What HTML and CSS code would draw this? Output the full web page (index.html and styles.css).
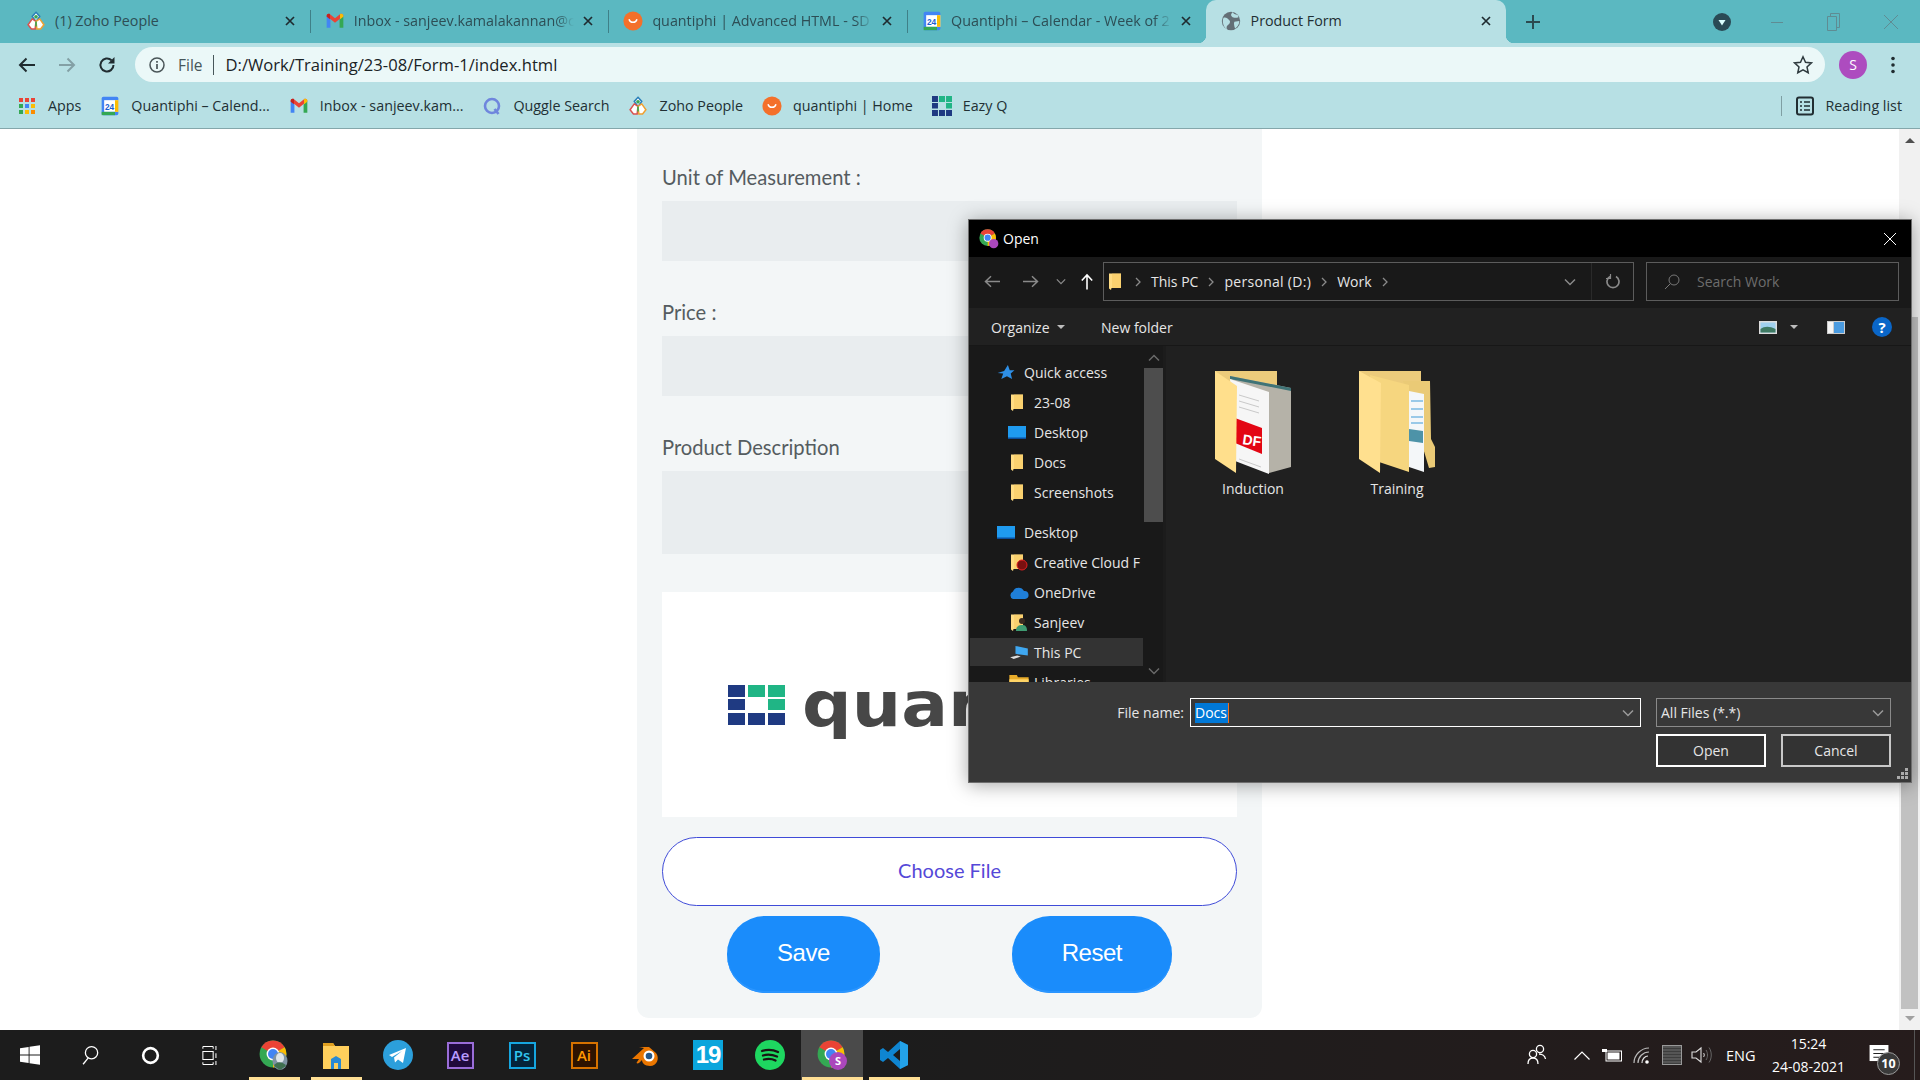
FILE: index.html
```html
<!DOCTYPE html>
<html lang="en">
<head>
<meta charset="utf-8">
<title>Product Form</title>
<link rel="stylesheet" href="styles.css">
</head>
<body>
<svg class="defs" width="0" height="0" aria-hidden="true">
  <symbol id="i-zoho" viewBox="0 0 24 24">
    <path d="M12 1.5l4.5 5-4.5 6-4.5-6z" fill="#fff" stroke="#2a80b9" stroke-width="1.8"/>
    <path d="M7.5 9.5l4.5 3-1 9H6.5l-4-5z" fill="#fff" stroke="#d9534f" stroke-width="1.8"/>
    <path d="M16.5 9.5l-4.5 3 1 9h4.500l4-5z" fill="#fff" stroke="#f0a030" stroke-width="1.8"/>
    <path d="M12 12.500v6" stroke="#3aa655" stroke-width="2"/>
    <circle cx="12" cy="7" r="2.200" fill="#3aa655"/>
  </symbol>
  <symbol id="i-gmail" viewBox="0 0 24 24">
    <path d="M2 6v14h4.500V10z" fill="#4285f4"/>
    <path d="M22 6v14h-4.500V10z" fill="#34a853"/>
    <path d="M2 6l10 8 10-8c0-2.500-2.500-3.200-4-2l-6 4.800L6 4C4.500 2.800 2 3.500 2 6z" fill="#ea4335"/>
    <path d="M22 6c0-2.500-2.500-3.200-4-2v6l4-3z" fill="#fbbc04"/>
    <path d="M2 6c0-2.500 2.500-3.200 4-2v6L2 7z" fill="#c5221f"/>
  </symbol>
  <symbol id="i-cal" viewBox="0 0 24 24">
    <rect x="2" y="1" width="20" height="22" rx="2" fill="#4285f4"/>
    <rect x="5" y="5" width="17" height="14" fill="#fff"/>
    <rect x="2" y="19" width="16" height="4" fill="#34a853"/>
    <rect x="18" y="5" width="4" height="14" fill="#fbbc04"/>
    <text x="11.500" y="16.500" text-anchor="middle" class="cal-num">24</text>
  </symbol>
  <symbol id="i-orange" viewBox="0 0 24 24">
    <circle cx="12" cy="12" r="11.500" fill="#f4702a"/>
    <path d="M7.500 10.500c1 4 8 4 9 0" fill="none" stroke="#fff" stroke-width="1.800" stroke-linecap="round"/>
  </symbol>
  <symbol id="i-globe" viewBox="0 0 24 24">
    <circle cx="12" cy="12" r="11" fill="#646f76"/>
    <path d="M3 8c3-1 5 1 7 3s0 5-2 6-1 4-1 5C3 19 1 13 3 8zM14 1.500c1 2 3 3 6 3l1 3c-3 1-6 1-8-1s0-4 1-5zM16 13l6-1c0 4-2 7-5 9-1-2-2-6-1-8z" fill="#b7e0e4"/>
  </symbol>
  <symbol id="i-chrome" viewBox="0 0 24 24">
    <circle cx="12" cy="12" r="11.500" fill="#34a853"/>
    <path d="M12 12L2 6.300A11.500 11.500 0 0 1 22 6.300z" fill="#ea4335"/>
    <path d="M12 12l10-5.700A11.500 11.500 0 0 1 12 23.500z" fill="#fbbc04"/>
    <circle cx="12" cy="12" r="5.500" fill="#fff"/>
    <circle cx="12" cy="12" r="4.300" fill="#4285f4"/>
  </symbol>
  <symbol id="i-qgrid" viewBox="0 0 57 40" preserveAspectRatio="none">
    <g fill="#1f3a82">
      <rect width="17" height="12"/><rect y="14" width="17" height="11"/><rect y="28" width="17" height="12"/>
      <rect x="20" y="28" width="17" height="12"/><rect x="40" y="28" width="17" height="12"/>
    </g>
    <g fill="#20b585">
      <rect x="20" width="17" height="12"/><rect x="40" width="17" height="12"/><rect x="40" y="14" width="17" height="11"/>
    </g>
  </symbol>
  <symbol id="i-fold" viewBox="0 0 12 17">
    <path d="M0 .5h12V15H2.500L2 17 0 15.500z" fill="#ffdc83"/>
    <path d="M3 .5h9V15H3z" fill="#f5c95f" opacity=".55"/>
  </symbol>
  <symbol id="i-desk" viewBox="0 0 18 13">
    <rect width="18" height="13" fill="#1f9bf0"/>
    <rect y="11.500" width="18" height="1.500" fill="#0a4f9e"/>
  </symbol>
  <symbol id="i-x" viewBox="0 0 10 10">
    <path d="M1 1l8 8M9 1L1 9" fill="none" stroke="currentColor" stroke-width="1.700"/>
  </symbol>
  <symbol id="i-chev" viewBox="0 0 6 10">
    <path d="M1 1l4 4-4 4" fill="none" stroke="#8a8a8a" stroke-width="1.300"/>
  </symbol>
  <symbol id="i-down" viewBox="0 0 12 8">
    <path d="M1 1.500l5 5 5-5" fill="none" stroke="currentColor" stroke-width="1.500"/>
  </symbol>
</svg>

<div class="tabstrip">
  <div class="tab"><svg class="fav"><use href="#i-zoho"/></svg><span class="tab-title">(1) Zoho People</span><svg class="tab-x"><use href="#i-x"/></svg></div>
  <i class="tab-sep"></i>
  <div class="tab"><svg class="fav"><use href="#i-gmail"/></svg><span class="tab-title tab-fade">Inbox - sanjeev.kamalakannan@c</span><svg class="tab-x"><use href="#i-x"/></svg></div>
  <i class="tab-sep"></i>
  <div class="tab"><svg class="fav"><use href="#i-orange"/></svg><span class="tab-title tab-fade">quantiphi | Advanced HTML - SD</span><svg class="tab-x"><use href="#i-x"/></svg></div>
  <i class="tab-sep"></i>
  <div class="tab tab-last"><svg class="fav"><use href="#i-cal"/></svg><span class="tab-title tab-fade">Quantiphi – Calendar - Week of 2</span><svg class="tab-x"><use href="#i-x"/></svg></div>
  <div class="tab tab-active"><svg class="fav"><use href="#i-globe"/></svg><span class="tab-title">Product Form</span><svg class="tab-x"><use href="#i-x"/></svg></div>
  <svg class="new-tab" viewBox="0 0 16 16"><path d="M8 1v14M1 8h14" stroke="#2c4a50" stroke-width="2"/></svg>
  <div class="win-controls">
    <svg class="tab-search" viewBox="0 0 18 18"><circle cx="9" cy="9" r="9" fill="#2a4a55"/><path d="M5.500 7h7L9 12.500z" fill="#dff"/></svg>
    <span class="win-btn"><svg width="12" height="12" viewBox="0 0 12 12"><path d="M0 6.500h12" stroke="#5f8c93"/></svg></span>
    <span class="win-btn"><svg width="14" height="20" viewBox="0 0 14 20"><path d="M.5 4.500h9v14h-9zM3.500 4.500v-3h9v14h-3" fill="none" stroke="#5f8c93"/></svg></span>
    <span class="win-btn win-btn-last"><svg width="14" height="20" viewBox="0 0 14 20"><path d="M0 3l14 14M14 3L0 17" stroke="#5f8c93"/></svg></span>
  </div>
</div>

<div class="toolbar">
  <span class="nav-btn"><svg width="18" height="16" viewBox="0 0 18 16"><path d="M17 8H2M8.500 1.500L2 8l6.500 6.500" fill="none" stroke="#202c30" stroke-width="2"/></svg></span>
  <span class="nav-btn"><svg width="18" height="16" viewBox="0 0 18 16"><path d="M1 8h15M9.500 1.500L16 8l-6.500 6.500" fill="none" stroke="#83a0a5" stroke-width="2"/></svg></span>
  <span class="nav-btn"><svg width="18" height="18" viewBox="0 0 18 18"><path d="M15.500 9A6.500 6.500 0 1 1 13.500 4.300" fill="none" stroke="#202c30" stroke-width="2"/><path d="M16.500 1v6.500H10z" fill="#202c30"/></svg></span>
  <div class="omnibox">
    <svg class="info" viewBox="0 0 16 16"><circle cx="8" cy="8" r="7" fill="none" stroke="#4a5558" stroke-width="1.500"/><path d="M8 7v5M8 4v1.800" stroke="#4a5558" stroke-width="1.700"/></svg>
    <span class="scheme">File</span>
    <i class="omni-sep"></i>
    <span class="url">D:/Work/Training/23-08/Form-1/index.html</span>
    <svg class="star" viewBox="0 0 20 20"><path d="M10 1.800l2.500 5.400 5.900.7-4.400 4 1.200 5.800L10 14.800l-5.200 2.900L6 11.900l-4.400-4 5.900-.7z" fill="none" stroke="#2f3b3f" stroke-width="1.500"/></svg>
  </div>
  <span class="avatar">S</span>
  <svg class="dots" viewBox="0 0 4 18"><circle cx="2" cy="2.500" r="1.800" fill="#202c30"/><circle cx="2" cy="9" r="1.800" fill="#202c30"/><circle cx="2" cy="15.500" r="1.800" fill="#202c30"/></svg>
</div>

<div class="bookmarks">
  <div class="bm"><svg class="bm-apps" viewBox="0 0 16 16"><g><rect width="4" height="4" fill="#ea4335"/><rect x="6" width="4" height="4" fill="#ea4335"/><rect x="12" width="4" height="4" fill="#ea4335"/><rect y="6" width="4" height="4" fill="#34a853"/><rect x="6" y="6" width="4" height="4" fill="#4285f4"/><rect x="12" y="6" width="4" height="4" fill="#fbbc04"/><rect y="12" width="4" height="4" fill="#34a853"/><rect x="6" y="12" width="4" height="4" fill="#fbbc04"/><rect x="12" y="12" width="4" height="4" fill="#fb8c00"/></g></svg><span>Apps</span></div>
  <div class="bm"><svg class="fav"><use href="#i-cal"/></svg><span>Quantiphi – Calend...</span></div>
  <div class="bm"><svg class="fav"><use href="#i-gmail"/></svg><span>Inbox - sanjeev.kam...</span></div>
  <div class="bm"><svg class="fav" viewBox="0 0 20 20"><circle cx="10" cy="10" r="7" fill="none" stroke="#6f86dd" stroke-width="2.600"/><path d="M12.500 13l4 5" stroke="#6f86dd" stroke-width="2.600"/></svg><span>Quggle Search</span></div>
  <div class="bm"><svg class="fav"><use href="#i-zoho"/></svg><span>Zoho People</span></div>
  <div class="bm"><svg class="fav"><use href="#i-orange"/></svg><span>quantiphi | Home</span></div>
  <div class="bm"><svg class="fav"><use href="#i-qgrid"/></svg><span>Eazy Q</span></div>
  <div class="reading">
    <i class="reading-sep"></i>
    <svg class="fav" viewBox="0 0 20 20"><rect x="2" y="1.500" width="16" height="17" rx="2" fill="none" stroke="#222e32" stroke-width="2"/><path d="M5 6h2M9 6h6M5 10h2M9 10h6M5 14h2M9 14h6" stroke="#222e32" stroke-width="1.600"/></svg>
    <span>Reading list</span>
  </div>
</div>

<div class="viewport">
  <div class="page">
    <form class="panel">
      <label class="field-label">Unit of Measurement :</label>
      <div class="field"></div>
      <label class="field-label">Price :</label>
      <div class="field"></div>
      <label class="field-label">Product Description</label>
      <div class="field field-tall"></div>
      <div class="preview">
        <svg class="logo-mark"><use href="#i-qgrid"/></svg>
        <span class="logo-word">quan</span>
      </div>
      <div class="choose">Choose File</div>
      <div class="actions">
        <span class="action">Save</span>
        <span class="action">Reset</span>
      </div>
    </form>
  </div>
  <div class="scrollbar">
    <span class="sb-up"></span>
    <span class="sb-thumb"></span>
    <span class="sb-down"></span>
  </div>
</div>

<div class="taskbar">
  <span class="tb tb-sys"><svg width="20" height="20" viewBox="0 0 22 22"><path d="M0 3.500l9.500-1.300v8.300H0zM10.500 2L22 .3v10.200H10.500zM0 11.500h9.500v8.300L0 18.500zM10.500 11.500H22v10.200L10.500 20z" fill="#fff"/></svg></span>
  <span class="tb tb-sys"><svg width="20" height="20" viewBox="0 0 22 26"><circle cx="13" cy="10" r="8" fill="none" stroke="#fff" stroke-width="1.700"/><path d="M8.500 17L2 25" stroke="#fff" stroke-width="1.700"/></svg></span>
  <span class="tb tb-sys"><svg width="19" height="19" viewBox="0 0 22 22"><circle cx="11" cy="11" r="8.500" fill="none" stroke="#fff" stroke-width="3"/></svg></span>
  <span class="tb tb-sys"><svg width="18" height="19" viewBox="0 0 20 24"><path d="M1 .5h13M1 23.500h13M1 7h13v10H1zM17.500 0v5M17.500 9v6M17.500 19v5M1 .5v3M14 .5v3M1 23.500v-3M14 23.500v-3" fill="none" stroke="#fff" stroke-width="1.300"/></svg></span>
  <span class="tb tb-run tb-first"><svg class="tb-icon" viewBox="0 0 30 30"><use href="#i-chrome" width="28" height="28"/><ellipse cx="21" cy="21" rx="7.500" ry="9" fill="#7f94a3"/><ellipse cx="21" cy="18" rx="4" ry="5" fill="#dfe6ea"/><path d="M15 26c2-5 9-5 12 0l-6 4z" fill="#3f6f4f"/></svg></span>
  <span class="tb tb-run"><svg class="tb-icon" viewBox="0 0 30 30"><path d="M2 3h10l2 3h14v23H2z" fill="#ffcf5c"/><path d="M2 3h10l2 3H2z" fill="#e0a020"/><path d="M10 19l5-3 5 3v10h-3v-6h-4v6h-3z" fill="#2a8ad4"/></svg></span>
  <span class="tb"><svg class="tb-icon" viewBox="0 0 30 30"><circle cx="15" cy="15" r="15" fill="#2c9fdb"/><path d="M6 15l17-7-3 15-5-3.500-3 3-1-5 8-6.500-10 6z" fill="#fff"/></svg></span>
  <span class="tb"><span class="adobe adobe-ae">Ae</span></span>
  <span class="tb"><span class="adobe adobe-ps">Ps</span></span>
  <span class="tb"><span class="adobe adobe-ai">Ai</span></span>
  <span class="tb"><svg class="tb-icon" viewBox="0 0 30 30"><path d="M1 19L13 8 8 7h10l7 6c4 5 1 13-6 13-5 0-8-3-8-6l-3 3c-2 1-3 0-2-1l2-3z" fill="#ea7600"/><circle cx="18" cy="16" r="5.500" fill="#fff"/><circle cx="18" cy="16" r="3.300" fill="#265787"/></svg></span>
  <span class="tb"><span class="tile19">19</span></span>
  <span class="tb"><svg class="tb-icon" viewBox="0 0 30 30"><circle cx="15" cy="15" r="15" fill="#1ed760"/><path d="M7 11c6-2 11-1.500 16 1M8 15.500c5-1.500 9-1 14 1M9 19.500c4-1 8-.8 11.500 1" fill="none" stroke="#191414" stroke-width="2.300" stroke-linecap="round"/></svg></span>
  <span class="tb tb-active"><svg class="tb-icon" viewBox="0 0 30 30"><use href="#i-chrome" width="28" height="28"/><circle cx="21" cy="21" r="9" fill="#ab47bc"/><text x="21" y="25" text-anchor="middle" class="badge-s">S</text></svg></span>
  <span class="tb tb-run"><svg class="tb-icon" viewBox="0 0 30 30"><path d="M21 1l8 4v20l-8 4L9 18l-5 4-3-2v-10l3-2 5 4zM21 9l-7 6 7 6z" fill="#0f85d1"/><path d="M21 1l8 4v20l-8 4z" fill="#23a2e9"/></svg></span>
  <div class="tray">
    <span class="tray-i tray-people"><svg width="20" height="22" viewBox="0 0 20 22"><circle cx="13" cy="5" r="3.600" fill="none" stroke="#fff" stroke-width="1.300"/><circle cx="6" cy="10" r="3.600" fill="none" stroke="#fff" stroke-width="1.300"/><path d="M1 20c0-4 2-6 5-6s5 2 5 6M12 10c3 0 6 2 6.500 5" fill="none" stroke="#fff" stroke-width="1.300"/></svg></span>
    <span class="tray-i"><svg width="16" height="9" viewBox="0 0 16 9"><path d="M.5 8.500L8 1l7.500 7.500" fill="none" stroke="#fff" stroke-width="1.200"/></svg></span>
    <span class="tray-i"><svg width="20" height="14" viewBox="0 0 20 14"><rect x="4" y="3" width="15.500" height="10" fill="none" stroke="#fff"/><rect x="5.500" y="4.500" width="12" height="7" fill="#fff"/><path d="M0 1h5v3H0z" fill="#fff"/></svg></span>
    <span class="tray-i"><svg width="18" height="18" viewBox="0 0 18 18"><path d="M1 17C1 9 8 2 16 2M5 17c0-6 5-11 11-11" fill="none" stroke="#bbb" stroke-width="1.200"/><path d="M9 17c0-4 3-7 6-7" fill="none" stroke="#ddd" stroke-width="1.200"/><circle cx="14" cy="16" r="1.800" fill="#fff"/></svg></span>
    <span class="tray-i"><span class="tray-box"></span></span>
    <span class="tray-i tray-vol"><svg width="22" height="18" viewBox="0 0 22 18"><path d="M1 6h4l5-4v14l-5-4H1z" fill="none" stroke="#ddd" stroke-width="1.100"/><path d="M12.500 7c1 1 1 3 0 4" fill="none" stroke="#ddd"/><path d="M15 4c2 3 2 7 0 10M18 1.500c3 4 3 11 0 15" fill="none" stroke="#666"/></svg></span>
    <span class="lang">ENG</span>
    <div class="clock"><span>15:24</span><span>24-08-2021</span></div>
    <span class="notif"><svg class="notif-ic" viewBox="0 0 20 18"><path d="M0 0h20v17H0z" fill="#fff"/><path d="M4 5h12M4 9h12M4 13h9" stroke="#222" stroke-width="1.200"/></svg><span class="notif-badge">10</span></span>
    <i class="show-desktop"></i>
  </div>
</div>

<div class="dialog">
  <div class="dlg-title">
    <svg class="dlg-logo" viewBox="0 0 30 30"><use href="#i-chrome" width="26" height="26"/><circle cx="22" cy="22" r="7" fill="#ab47bc"/></svg>
    <span class="dlg-name">Open</span>
    <svg class="dlg-close" viewBox="0 0 12 12"><path d="M0 0l12 12M12 0L0 12" stroke="#fff"/></svg>
  </div>
  <div class="dlg-nav">
    <svg class="dn dn-back" viewBox="0 0 16 12"><path d="M16 6H1.500M7 .8L1.500 6 7 11.200" fill="none" stroke="#8a8a8a" stroke-width="1.500"/></svg>
    <svg class="dn dn-fwd" viewBox="0 0 16 12"><path d="M0 6h14.500M9 .8L14.500 6 9 11.200" fill="none" stroke="#8a8a8a" stroke-width="1.500"/></svg>
    <svg class="dn dn-recent"><use href="#i-down"/></svg>
    <svg class="dn dn-up" viewBox="0 0 12 16"><path d="M6 16V1.500M.8 7L6 1.500 11.200 7" fill="none" stroke="#fff" stroke-width="1.600"/></svg>
    <div class="crumbs">
      <svg class="crumb-folder"><use href="#i-fold"/></svg>
      <svg class="crumb-chev"><use href="#i-chev"/></svg>
      <span>This PC</span>
      <svg class="crumb-chev"><use href="#i-chev"/></svg>
      <span class="crumb-wide">personal (D:)</span>
      <svg class="crumb-chev"><use href="#i-chev"/></svg>
      <span>Work</span>
      <svg class="crumb-chev"><use href="#i-chev"/></svg>
      <svg class="crumb-down"><use href="#i-down"/></svg>
      <span class="crumb-refresh"><svg width="14" height="15" viewBox="0 0 14 15"><path d="M4 2.500a6 6 0 1 0 6 0" fill="none" stroke="#8a8a8a" stroke-width="1.700"/><path d="M4.500 0v4.500H0" fill="none" stroke="#8a8a8a" stroke-width="1.200"/></svg></span>
    </div>
    <div class="search">
      <svg width="16" height="16" viewBox="0 0 16 16"><circle cx="10" cy="6" r="5" fill="none" stroke="#777"/><path d="M6.500 9.500L1 15" stroke="#777"/></svg>
      <span>Search Work</span>
    </div>
  </div>
  <div class="dlg-cmd">
    <span class="cmd-org">Organize</span>
    <i class="tri"></i>
    <span class="cmd-new">New folder</span>
    <svg class="cmd-view" viewBox="0 0 18 13"><rect width="18" height="13" fill="#ddd"/><rect x="1.500" y="1.500" width="15" height="10" fill="#9fd0ee"/><path d="M1.500 8c4-3 9-3 15 0v3.500h-15z" fill="#3f7a63"/></svg>
    <i class="tri tri-view"></i>
    <svg class="cmd-pane" viewBox="0 0 18 13"><rect width="18" height="13" fill="#ccc"/><rect x="1" y="1" width="5" height="11" fill="#f5f5f5"/><rect x="7" y="1" width="10" height="11" fill="#4a9be0"/></svg>
    <span class="cmd-help">?</span>
  </div>
  <div class="dlg-body">
    <div class="tree-wrap">
      <ul class="tree">
        <li class="tree-root"><svg class="t-ic" viewBox="0 0 18 16"><path d="M11 0l2 5.500h5l-4 3.500 1.500 6L10 12l-6 3 2-6-6-.500 7-2z" fill="#2e8fe6"/></svg>Quick access</li>
        <li><svg class="t-fold"><use href="#i-fold"/></svg>23-08</li>
        <li><svg class="t-desk"><use href="#i-desk"/></svg>Desktop</li>
        <li><svg class="t-fold"><use href="#i-fold"/></svg>Docs</li>
        <li><svg class="t-fold"><use href="#i-fold"/></svg>Screenshots</li>
        <li class="tree-root tree-gap"><svg class="t-ic"><use href="#i-desk"/></svg>Desktop</li>
        <li><svg class="t-badge" viewBox="0 0 17 17"><use href="#i-fold" width="12" height="17"/><circle cx="11" cy="11" r="5" fill="#7a1010" stroke="#e02020"/></svg>Creative Cloud F</li>
        <li><svg class="t-cloud" viewBox="0 0 20 13"><path d="M4 13a4 4 0 0 1 0-7.500A6 6 0 0 1 15 5a4 4 0 0 1 1 8z" fill="#1f7fd8"/></svg>OneDrive</li>
        <li><svg class="t-badge" viewBox="0 0 17 17"><use href="#i-fold" width="12" height="17"/><circle cx="11" cy="7" r="3" fill="#3a2a20"/><path d="M5 17c0-5 3-6 6-6s5 1 5 6z" fill="#3f9b72"/></svg>Sanjeev</li>
        <li class="t-sel"><svg class="t-cloud" viewBox="0 0 20 17"><path d="M6 1l14 3v8l-14-2z" fill="#3fa7f0"/><path d="M0 14l8-2 4 1-8 3z" fill="#ddd"/></svg>This PC</li>
        <li><svg class="t-cloud" viewBox="0 0 18 14"><path d="M0 0h7l1 2h10v12H0z" fill="#e8ac2a"/><path d="M0 4h18v10H0z" fill="#ffd466"/></svg>Libraries</li>
      </ul>
      <div class="tree-sb">
        <svg class="tree-arrow"><use href="#i-down"/></svg>
        <span class="tree-thumb"></span>
        <svg class="tree-arrow tree-arrow-b"><use href="#i-down"/></svg>
      </div>
    </div>
    <div class="files">
      <div class="file">
        <svg class="bigfolder" viewBox="0 0 76 103">
          <path d="M0 0h62v22H0z" fill="#eccb7b"/>
          <path d="M15 5l61 12v79l-22 6z" fill="#b5b2a8"/>
          <path d="M15 5l61 12v3L15 8z" fill="#3f7376"/>
          <path d="M15 8l39 13v82L20 90z" fill="#f6f6f6"/>
          <path d="M24 24l20 6M24 30l20 6M24 36l20 6M24 88l22 8" stroke="#c9c9c9"/>
          <path d="M20 47l27 10v26L20 72z" fill="#e30613"/>
          <text x="27" y="73" class="pdf" transform="rotate(8 27 73)">DF</text>
          <path d="M0 0l22 15-1 87L0 88z" fill="#ffdf8c"/>
        </svg>
        <span>Induction</span>
      </div>
      <div class="file">
        <svg class="bigfolder" viewBox="0 0 76 103">
          <path d="M0 0h62v14H0z" fill="#eccb7b"/>
          <path d="M44 10h27l1 58 4 8v20l-6 1z" fill="#eaca76"/>
          <path d="M50 20l15 3v78l-18-6z" fill="#f4f7f9"/>
          <path d="M52 30h12M52 38h12M52 46h12M52 52h12" stroke="#3f9bd8" stroke-width="1.200"/>
          <path d="M50 58l14 2v12l-14-2z" fill="#4d93a8"/>
          <path d="M11 4l39 10v87L20 91z" fill="#f6d67f"/>
          <path d="M0 0l22 12-1 90L0 88z" fill="#ffe08f"/>
        </svg>
        <span>Training</span>
      </div>
    </div>
  </div>
  <div class="dlg-foot">
    <div class="foot-row">
      <span class="foot-label">File name:</span>
      <div class="combo combo-name"><span class="sel">Docs</span><svg class="combo-arrow"><use href="#i-down"/></svg></div>
      <div class="combo combo-type"><span>All Files (*.*)</span><svg class="combo-arrow"><use href="#i-down"/></svg></div>
    </div>
    <div class="foot-row foot-btns">
      <span class="dbtn dbtn-primary">Open</span>
      <span class="dbtn">Cancel</span>
    </div>
    <svg class="grip" viewBox="0 0 12 12"><path d="M8 0h3v3H8zM4 4h3v3H4zM8 4h3v3H8zM0 8h3v3H0zM4 8h3v3H4zM8 8h3v3H8z" fill="#aaa"/></svg>
  </div>
</div>
</body>
</html>
```

FILE: styles.css
```css
* { box-sizing: border-box; }
html, body { margin: 0; height: 100%; }
body {
  width: 1920px;
  height: 1080px;
  overflow: hidden;
  position: relative;
  display: flex;
  flex-direction: column;
  background: #fff;
  font-family: "Open Sans", "Noto Sans", sans-serif;
  color: #222;
}
.defs { position: absolute; }
i { display: block; font-style: normal; }
svg { display: block; flex: none; }
.cal-num { font: 700 10px "Liberation Sans", sans-serif; fill: #1a5fd0; }
.badge-s { font: 700 11px "Open Sans", sans-serif; fill: #fff; }
.pdf { font: 700 14px "Liberation Sans", sans-serif; fill: #fff; }

/* tab strip */
.tabstrip {
  height: 43px;
  flex: none;
  display: flex;
  align-items: center;
  padding-left: 12px;
  background: #5bb8c1;
}
.tab {
  width: 297.7px;
  height: 43px;
  flex: none;
  display: flex;
  align-items: center;
  gap: 9px;
  padding: 0 15px 2px 14px;
  color: #2d4e55;
}
.tab-last { width: 297.5px; }
.tab-sep { width: 1px; height: 23px; margin-bottom: 1px; background: #3f8088; flex: none; }
.tab-active {
  width: 300px;
  position: relative;
  gap: 10px;
  padding-left: 15px;
  background: #b7e0e4;
  border-radius: 10px 10px 0 0;
  color: #1f2f33;
}
.tab-active::before, .tab-active::after {
  content: "";
  position: absolute;
  bottom: 0;
  width: 8px;
  height: 8px;
}
.tab-active::before { left: -8px; background: radial-gradient(circle at 0 0, transparent 8px, #b7e0e4 8.500px); }
.tab-active::after { right: -8px; background: radial-gradient(circle at 100% 0, transparent 8px, #b7e0e4 8.500px); }
.fav { width: 20px; height: 20px; }
.tab-title {
  flex: 1;
  min-width: 0;
  white-space: nowrap;
  overflow: hidden;
  font-size: 14.3px;
}
.tab-fade {
  -webkit-mask-image: linear-gradient(90deg, #000 92%, transparent 100%);
  mask-image: linear-gradient(90deg, #000 92%, transparent 100%);
}
.tab-x { width: 10px; height: 10px; color: #1f2b30; }
.new-tab { width: 16px; height: 16px; margin-left: 19px; }
.win-controls { margin-left: auto; display: flex; align-items: center; }
.tab-search { width: 18px; height: 18px; margin-right: 18px; }
.win-btn { width: 56.500px; height: 43px; display: flex; align-items: center; justify-content: center; }
.win-btn-last { width: 58px; }

/* toolbar */
.toolbar {
  height: 43px;
  flex: none;
  display: flex;
  align-items: center;
  padding: 0 0 0 7px;
  background: #b7e0e4;
}
.nav-btn { width: 40px; height: 35px; display: flex; align-items: center; justify-content: center; }
.omnibox {
  width: 1690px;
  height: 35px;
  margin-left: 8px;
  display: flex;
  align-items: center;
  padding: 0 12px 0 14px;
  background: #ebf8f8;
  border-radius: 18px;
}
.info { width: 16px; height: 16px; }
.scheme { margin-left: 13px; color: #47565a; font-size: 15.500px; }
.omni-sep { width: 1px; height: 20px; background: #47565a; margin: 0 12px 0 10px; }
.url { color: #1a2326; font-size: 16.600px; flex: 1; }
.star { width: 20px; height: 20px; }
.avatar {
  width: 28px;
  height: 28px;
  margin-left: 14px;
  border-radius: 50%;
  background: #ad4cbf;
  color: #fff;
  font-size: 14px;
  display: flex;
  align-items: center;
  justify-content: center;
}
.dots { width: 4px; height: 18px; margin-left: 24px; }

/* bookmarks */
.bookmarks {
  height: 43px;
  flex: none;
  display: flex;
  align-items: center;
  gap: 19px;
  padding-left: 17px;
  padding-bottom: 3px;
  background: #b7e0e4;
  border-bottom: 1px solid #84a7ab;
  font-size: 14.300px;
  color: #223034;
}
.bm { display: flex; align-items: center; gap: 11px; white-space: nowrap; }
.bm-apps { width: 20px; height: 16px; padding: 0 2px; }
.reading {
  margin-left: auto;
  margin-right: 18px;
  display: flex;
  align-items: center;
  gap: 10px;
}
.reading-sep { width: 1px; height: 20px; background: #7f9fa3; margin-right: 3px; }

/* page */
.viewport { flex: 1; min-height: 0; display: flex; }
.page { flex: 1; min-width: 0; overflow: hidden; background: #fff; }
.panel {
  width: 625px;
  margin: 0 auto;
  padding: 33px 25px 25px;
  background: #f3f6f7;
  border-radius: 0 0 12px 12px;
  display: flex;
  flex-direction: column;
  font-family: "Lato", "Open Sans", sans-serif;
}
.field-label { display: block; height: 30px; line-height: 30px; margin-bottom: 9px; font-size: 20.200px; color: #555c60; }
.field { height: 60px; margin-bottom: 36px; background: #e9edef; }
.field-tall { height: 83px; margin-bottom: 38px; }
.preview {
  height: 225px;
  background: #fff;
  overflow: hidden;
  display: flex;
  align-items: center;
  padding: 0 0 0 66px;
  gap: 17px;
}
.logo-mark { width: 57px; height: 40px; }
.logo-word {
  font: 700 62px "DejaVu Sans", sans-serif;
  color: #474747;
  line-height: 1;
  white-space: nowrap;
  transform: scaleX(1.12);
  transform-origin: left center;
}
.choose {
  height: 69px;
  margin-top: 20px;
  padding-bottom: 3px;
  border: 1px solid #3f4bd8;
  border-radius: 35px;
  background: #fff;
  color: #5548d8;
  font-size: 20px;
  display: flex;
  align-items: center;
  justify-content: center;
}
.actions { margin-top: 10px; display: flex; justify-content: center; gap: 132px; }
.action {
  height: 77px;
  padding: 0 50px;
  border-radius: 38px;
  background: #1a8cfb;
  box-shadow: inset 0 -2px 0 #2a95ff;
  color: #fff;
  font: 24px/74px "Liberation Sans", sans-serif;
  letter-spacing: -.5px;
}
.scrollbar {
  width: 21px;
  flex: none;
  background: #f1f1f1;
  display: flex;
  flex-direction: column;
  align-items: center;
}
.sb-up, .sb-down { width: 0; height: 0; border: 5px solid transparent; border-top: 0; border-bottom: 5px solid #505050; margin-top: 9px; }
.sb-thumb { width: 17px; height: 692px; margin-top: 174px; background: #c1c1c1; }
.sb-down { border-bottom: 0; border-top: 5px solid #a0a0a0; margin-top: 7px; }

/* taskbar */
.taskbar {
  height: 50px;
  flex: none;
  display: flex;
  align-items: center;
  background: linear-gradient(90deg, #1c1c1c 0%, #1c1c1c 45%, #261c1c 100%);
  color: #fff;
}
.tb {
  width: 62px;
  height: 50px;
  flex: none;
  display: flex;
  align-items: center;
  justify-content: center;
}
.tb-sys { width: 60px; }
.tb-first { margin-left: 3px; }
.tb-icon { width: 30px; height: 30px; }
.tb-run { background: linear-gradient(#ffdf94, #ffdf94) center bottom / 51px 3px no-repeat; }
.tb-active { background: linear-gradient(#ffdf94, #ffdf94) center bottom / 61px 3px no-repeat, #4a4a4a; }
.adobe {
  width: 27px;
  height: 27px;
  display: flex;
  align-items: center;
  justify-content: center;
  font: 600 15px "Open Sans", sans-serif;
  border: 2px solid;
}
.adobe-ae { background: #1f0a3c; color: #b99bff; border-color: #9a6dd8; }
.adobe-ps { background: #04243a; color: #31c5f0; border-color: #16a6e0; }
.adobe-ai { background: #2e1300; color: #ff9a00; border-color: #d67200; }
.tile19 {
  width: 30px;
  height: 30px;
  background: #0aa5dc;
  color: #fff;
  font: 800 24px/30px "Liberation Sans", sans-serif;
  letter-spacing: -1px;
  text-align: center;
}
.tray { margin-left: auto; display: flex; align-items: center; height: 50px; }
.tray-i { width: 30px; height: 50px; display: flex; align-items: center; justify-content: center; }
.tray-people { margin-right: 15px; }
.tray-vol { margin-right: 9px; }
.tray-box { width: 20px; height: 20px; border: 1px solid #999; background: repeating-linear-gradient(#555 0 2px, #3d3d3d 2px 3px); }
.lang { font-size: 14.500px; width: 29px; margin-right: 10px; white-space: nowrap; }
.clock {
  width: 87px;
  display: flex;
  flex-direction: column;
  align-items: center;
  gap: 4px;
  font-size: 14px;
  line-height: 19px;
}
.notif { width: 62px; height: 50px; display: flex; align-items: center; padding-left: 17px; position: relative; }
.notif-ic { width: 20px; height: 17px; margin-top: -3px; }
.notif-badge {
  position: absolute;
  left: 25px;
  top: 22px;
  width: 23px;
  height: 23px;
  border: 1px solid #999;
  border-radius: 50%;
  background: #3a3a3a;
  color: #fff;
  font: 700 12.500px/21px "Open Sans", sans-serif;
  text-align: center;
}
.show-desktop { width: 6px; height: 50px; border-left: 1px solid #555; }

/* file dialog */
.dialog {
  position: absolute;
  left: 968px;
  top: 219px;
  width: 944px;
  height: 564px;
  border: 1px solid #6e6e6e;
  background: #202020;
  box-shadow: 0 2px 18px rgba(0, 0, 0, .35);
  display: flex;
  flex-direction: column;
  font-family: "Open Sans", "Noto Sans", sans-serif;
  font-size: 14px;
  color: #e6e6e6;
}
.dlg-title { height: 37px; flex: none; display: flex; align-items: center; padding-left: 10px; background: #000; color: #fff; }
.dlg-logo { width: 20px; height: 20px; }
.dlg-name { margin-left: 4px; }
.dlg-close { width: 12px; height: 12px; margin-left: auto; margin-right: 15px; }
.dlg-nav { height: 51px; flex: none; display: flex; align-items: flex-start; padding-top: 5px; background: #191919; }
.dn { height: 39px; padding: 13px 0; }
.dn-back { width: 16px; margin-left: 15px; }
.dn-fwd { width: 16px; margin-left: 23px; }
.dn-recent { width: 10px; margin-left: 17px; padding: 16px 0; color: #8a8a8a; }
.dn-up { width: 12px; margin-left: 15px; padding: 11px 0; }
.crumbs {
  width: 531px;
  height: 39px;
  margin-left: 10px;
  border: 1px solid #5c5c5c;
  display: flex;
  align-items: center;
  padding-left: 5px;
}
.crumb-folder { width: 12px; height: 17px; }
.crumb-chev { width: 6px; height: 10px; margin: 0 10px; }
.crumb-folder + .crumb-chev { margin-left: 14px; }
.crumb-wide { letter-spacing: .3px; }
.crumb-down { width: 12px; height: 8px; color: #8a8a8a; margin-left: auto; }
.crumb-refresh {
  width: 42px;
  height: 37px;
  margin-left: 15px;
  border-left: 1px solid #2a2a2a;
  display: flex;
  align-items: center;
  justify-content: center;
}
.search {
  width: 253px;
  height: 39px;
  margin-left: 12px;
  border: 1px solid #5c5c5c;
  display: flex;
  align-items: center;
  gap: 17px;
  padding-left: 17px;
  color: #6d6d6d;
}
.dlg-cmd {
  height: 38px;
  flex: none;
  display: flex;
  align-items: center;
  background: #212121;
  border-bottom: 1px solid #171717;
  padding-left: 22px;
  padding-top: 1px;
}
.cmd-org { width: 60px; }
.tri { width: 0; height: 0; border: 4px solid transparent; border-top: 4px solid #bdbdbd; border-bottom: 0; margin-left: 6px; }
.cmd-new { margin-left: 36px; }
.cmd-view { width: 18px; height: 13px; margin-left: auto; }
.tri-view { margin-left: 13px; }
.cmd-pane { width: 18px; height: 13px; margin-left: 29px; }
.cmd-help {
  width: 20px;
  height: 20px;
  margin: 0 19px 0 27px;
  border-radius: 50%;
  background: #0a66c8;
  color: #fff;
  font: 700 15px/20px "Open Sans", sans-serif;
  text-align: center;
}
.dlg-body { flex: 1; min-height: 0; display: flex; }
.tree-wrap { width: 197px; flex: none; display: flex; background: #191919; border-right: 3px solid #1c1c1c; overflow: hidden; }
.tree { list-style: none; margin: 0; padding: 11px 0 0 1px; width: 175px; height: 336px; overflow: hidden; }
.tree li { height: 30px; display: flex; align-items: center; padding-left: 42px; white-space: nowrap; overflow: hidden; }
.tree .tree-root { gap: 9px; padding-left: 30px; }
.tree-gap { margin-top: 10px; }
.t-ic { width: 18px; height: 15px; margin-left: -3px; }
.t-fold { width: 12px; height: 17px; margin-right: 11px; margin-left: -1px; }
.t-desk { width: 18px; height: 13px; margin-right: 8px; margin-left: -4px; }
.t-badge { width: 17px; height: 17px; margin-left: -1px; margin-right: 6px; }
.t-cloud { width: 20px; height: 15px; margin-right: 5px; margin-left: -3px; }
.tree .t-sel { background: #333; height: 28px; margin: 1px 0; }
.tree-sb { width: 19px; margin-left: 1px; display: flex; flex-direction: column; align-items: center; color: #6a6a6a; }
.tree-arrow { width: 12px; height: 8px; margin-top: 8px; transform: scaleY(-1); }
.tree-thumb { width: 19px; height: 154px; margin-top: 6px; background: #4d4d4d; }
.tree-arrow-b { margin-top: 145px; transform: none; }
.files { flex: 1; display: flex; align-items: flex-start; padding: 25px 0 0 15px; gap: 0; }
.file { width: 144px; display: flex; flex-direction: column; align-items: center; gap: 5px; }
.bigfolder { width: 76px; height: 103px; }
.dlg-foot { height: 100px; flex: none; background: #383838; padding: 16px 20px 0 0; position: relative; }
.foot-row { display: flex; justify-content: flex-end; align-items: center; }
.foot-label { margin-right: 6px; }
.combo { height: 29px; display: flex; align-items: center; justify-content: space-between; padding: 0 5px 0 4px; }
.combo-name { width: 451px; border: 1px solid #fff; margin-right: 15px; }
.combo-type { width: 235px; border: 1px solid #8a8a8a; }
.sel { background: #0078d7; color: #fff; height: 20px; line-height: 19px; padding: 0 1px 0 0; border-right: 1px solid #f07020; }
.combo-arrow { width: 12px; height: 8px; color: #9a9a9a; margin-right: 1px; }
.foot-btns { margin-top: 7px; gap: 15px; }
.dbtn {
  width: 110px;
  height: 33px;
  border: 2px solid #c8c8c8;
  background: #333;
  display: flex;
  align-items: center;
  justify-content: center;
}
.dbtn-primary { border-color: #fff; }
.grip { position: absolute; right: 2px; bottom: 2px; width: 12px; height: 12px; }
```
